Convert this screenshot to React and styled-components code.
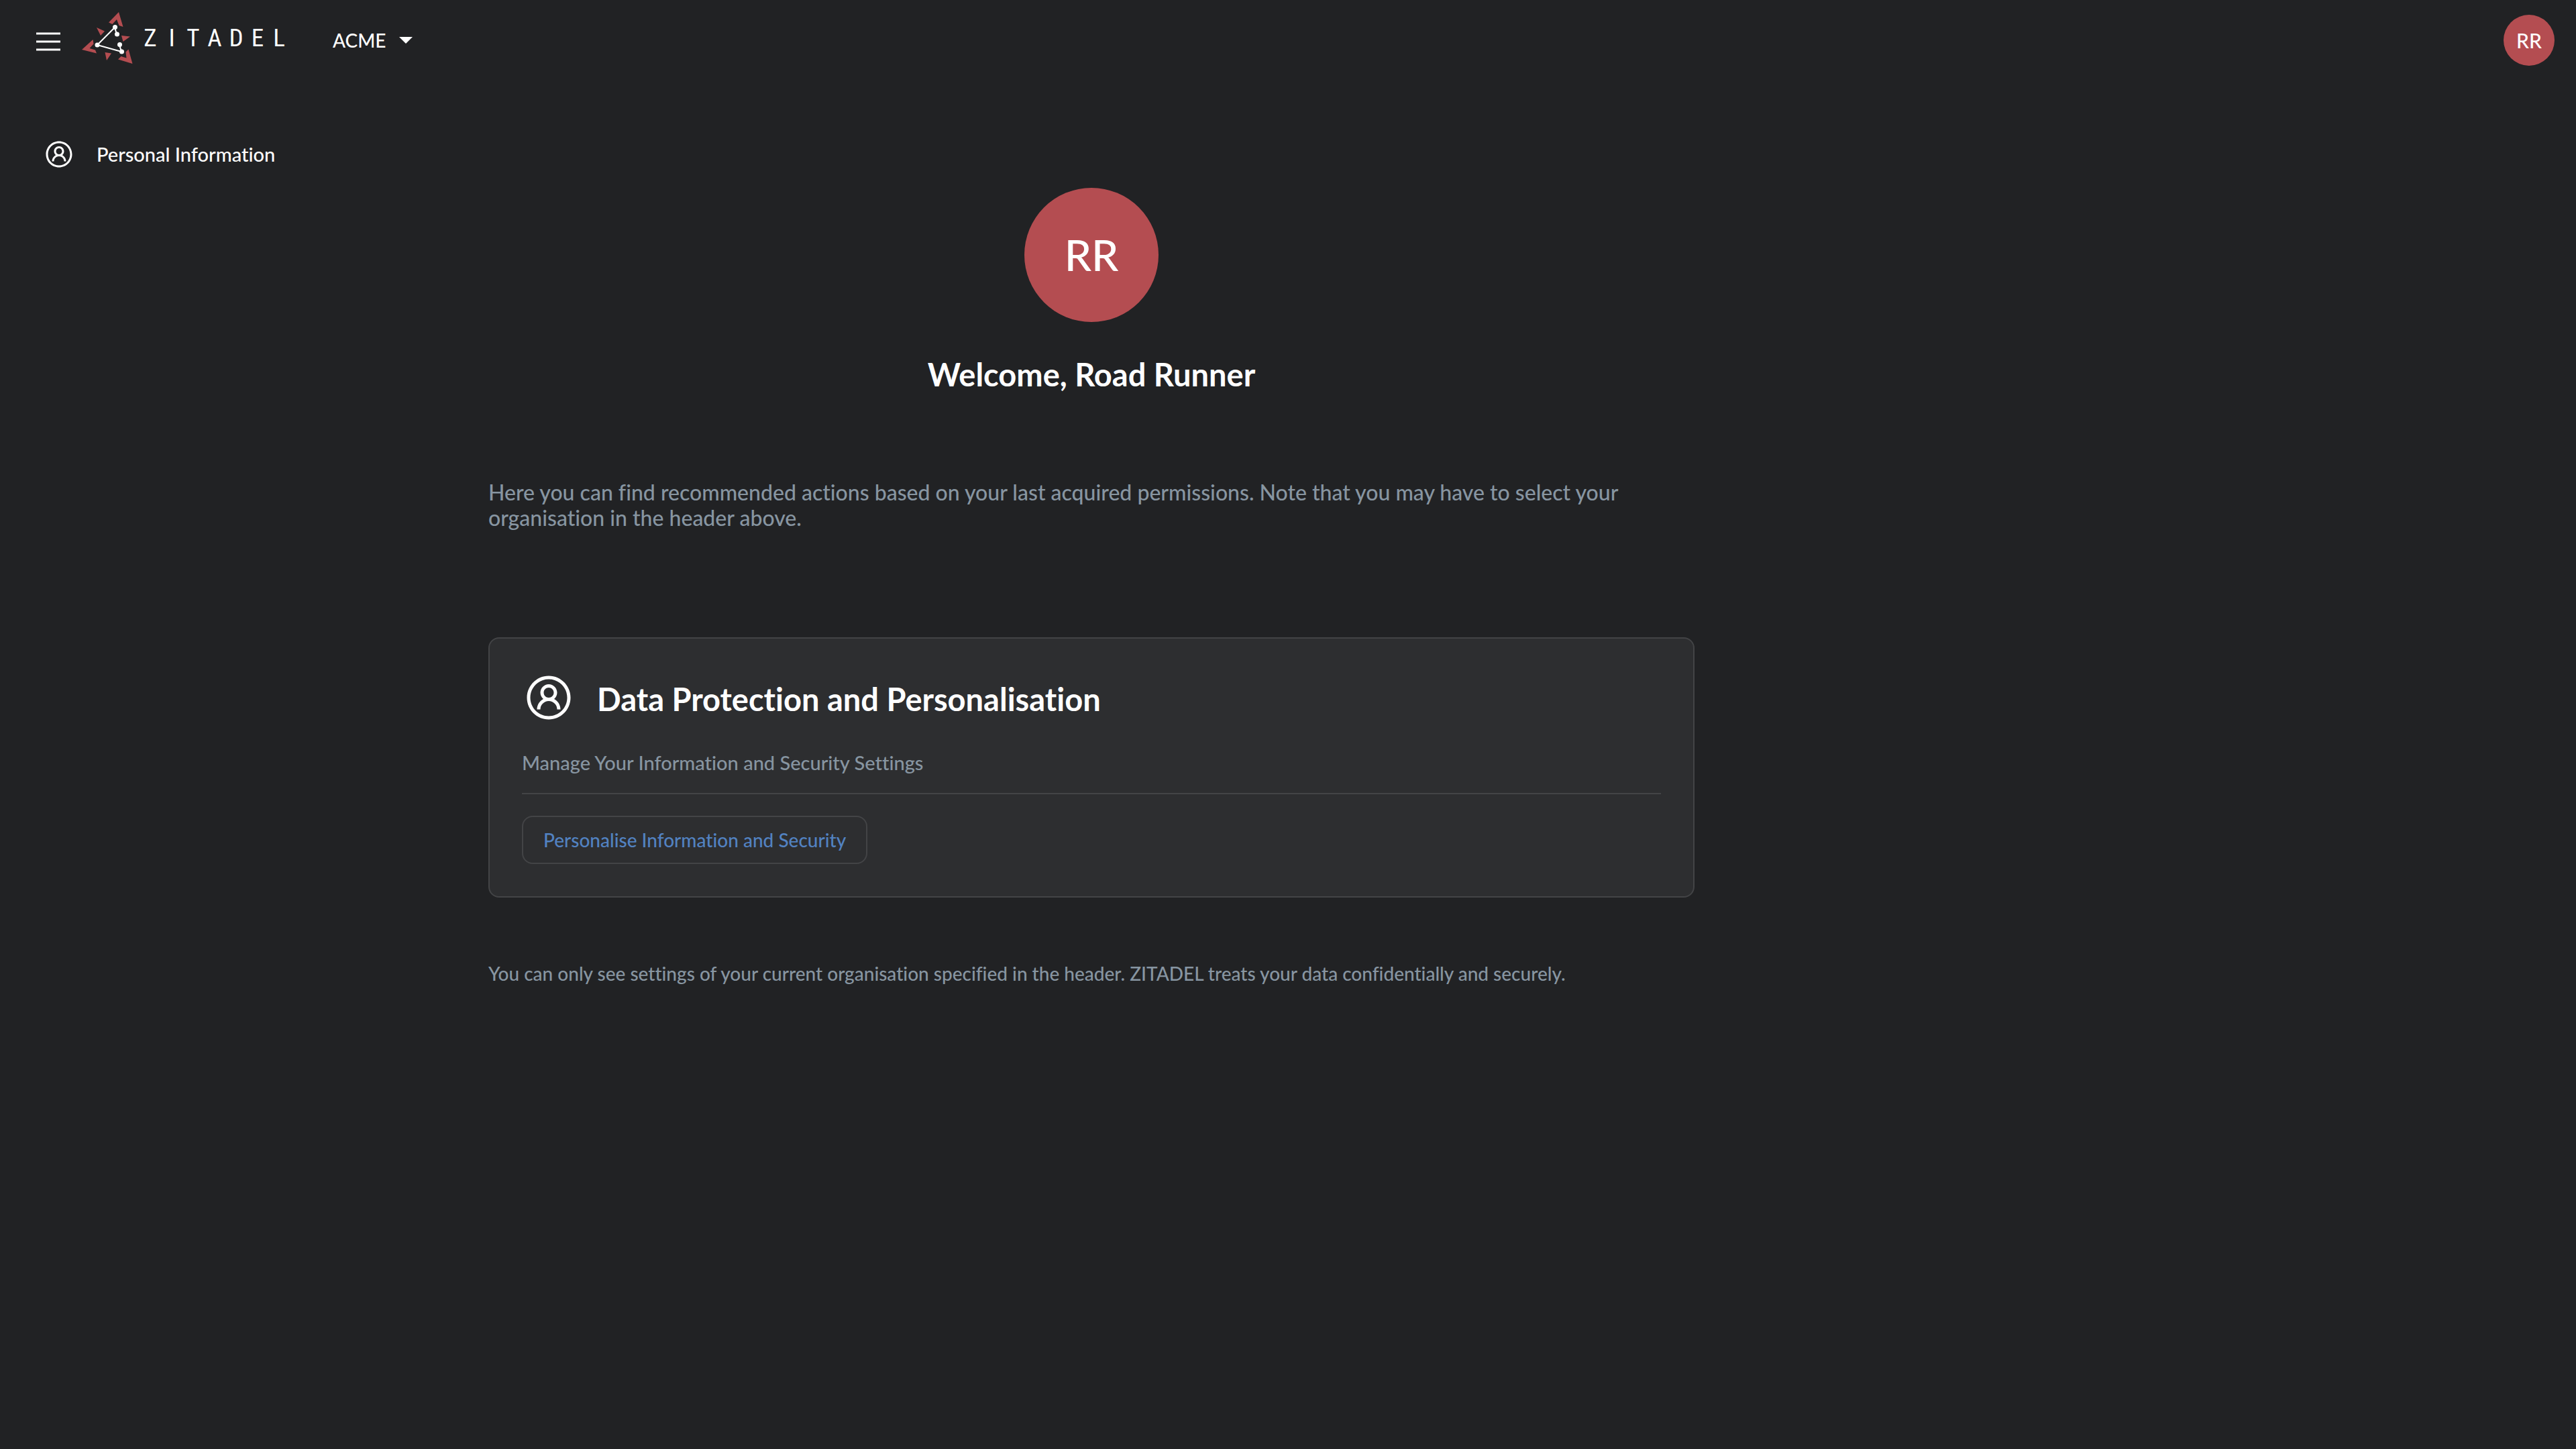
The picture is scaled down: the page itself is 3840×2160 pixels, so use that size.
import React from "react";
import styled, { createGlobalStyle } from "styled-components";
import { LiaBarsSolid, LiaUserCircleSolid } from "react-icons/lia";

const color = {
  background: "#212224",
  card: "#2d2e30",
  border: "#434446",
  text: "#ffffff",
  muted: "#8795a1",
  primary: "#5282c1",
  accent: "#b44d51",
};

const GlobalStyle = createGlobalStyle`
  *, *::before, *::after { box-sizing: border-box; }
  body {
    margin: 0;
    background: ${color.background};
    color: ${color.text};
    font-family: Lato, "Liberation Sans", sans-serif;
    font-size: 28px;
    font-weight: 500;
    line-height: 34px;
    font-variant-ligatures: none;
  }
  button { font: inherit; color: inherit; background: none; border: 0; padding: 0; cursor: pointer; }
  a { color: inherit; text-decoration: none; }
  h1, h2, p { margin: 0; }
  svg { display: block; flex: none; }
`;

const Page = styled.div`
  display: flex;
  flex-direction: column;
  min-height: 100vh;
`;

const Header = styled.header`
  display: flex;
  align-items: center;
  height: 120px;
  padding: 0 32px 0 48px;
`;

const MenuButton = styled.button`
  display: flex;
  padding-top: 4px;
`;

const Brand = styled.a`
  display: flex;
  align-items: center;
  gap: 8px;
  margin-left: 26px;
  padding-bottom: 6px;
`;

const Wordmark = styled.span`
  display: grid;
  grid-template-columns: repeat(7, 32px);
  justify-items: center;
  font-family: "Liberation Sans Narrow", "Roboto Condensed", "Open Sans Condensed", Lato, sans-serif;
  font-size: 37px;
  font-weight: 400;
  line-height: 40px;
`;

const OrgButton = styled.button`
  display: flex;
  align-items: center;
  gap: 20px;
  margin-left: 64px;
`;

const Caret = styled.span`
  border: 10px solid transparent;
  border-top-color: ${color.text};
  border-bottom: 0;
`;

const Avatar = styled.span`
  display: flex;
  align-items: center;
  justify-content: center;
  width: ${(p) => p.$size}px;
  height: ${(p) => p.$size}px;
  border-radius: 50%;
  background: ${color.accent};
  font-size: ${(p) => p.$font}px;
  line-height: 1;
`;

const AccountButton = styled.button`
  margin-left: auto;
`;

const Body = styled.div`
  display: flex;
  flex: 1;
`;

const SideNav = styled.nav`
  flex: none;
  width: 728px;
  padding: 86px 64px;
`;

const NavLink = styled.a`
  display: flex;
  align-items: center;
  gap: 32px;
  font-size: 29px;
`;

const Main = styled.main`
  display: flex;
  flex-direction: column;
  flex: 0 1 1798px;
  padding: 160px 0 80px;
`;

const Hero = styled.section`
  display: flex;
  flex-direction: column;
  align-items: center;
  gap: 48px;
`;

const Title = styled.h1`
  font-size: 47px;
  line-height: 60px;
  font-weight: 700;
`;

const Description = styled.p`
  margin-top: 127px;
  color: ${color.muted};
  font-size: 32px;
  line-height: 38px;
`;

const Card = styled.section`
  margin-top: 159px;
  padding: 48px;
  border: 2px solid ${color.border};
  border-radius: 16px;
  background: ${color.card};
`;

const CardHeader = styled.div`
  display: flex;
  align-items: center;
  gap: 32px;
`;

const CardTitle = styled.h2`
  padding-top: 4px;
  font-size: 47px;
  line-height: 60px;
  font-weight: 700;
`;

const CardText = styled.p`
  padding: 40px 0 28px;
  border-bottom: 2px solid ${color.border};
  color: ${color.muted};
  font-size: 29px;
`;

const CardAction = styled.button`
  height: 72px;
  margin-top: 32px;
  padding: 0 30px;
  border: 2px solid ${color.border};
  border-radius: 16px;
  color: ${color.primary};
`;

const Footnote = styled.p`
  margin-top: 96px;
  color: ${color.muted};
`;

function LogoMark() {
  return (
    <svg width="78" height="78" viewBox="0 0 78 78" aria-hidden="true">
      <g fill={color.accent}>
        <path d="M55 0 61.500 22 55.500 20 52 11 45.500 18 40 15.500Z" />
        <path d="M22 23 34 28.500 28 35Z" />
        <path d="M59 35 72 36.500 61.500 44Z" />
        <path d="M34.500 60 44 61.500 37 72Z" />
        <path d="M0 56 16.500 41 17.500 47.500 11.500 54 20 56.500 22 61.500Z" />
        <path d="M75.500 77 54 70.500 58.500 66 66.500 68.500 65.500 59.500 69.500 55.500Z" />
      </g>
      <g stroke={color.text} strokeWidth="2" fill="none">
        <path d="M52 33 49 23 23 49 59 59 56 49" />
      </g>
      <g fill={color.text}>
        <circle cx="49.500" cy="22.500" r="3.500" />
        <circle cx="52.500" cy="33" r="3.500" />
        <circle cx="23" cy="49" r="3.500" />
        <circle cx="56.500" cy="48.500" r="3.500" />
        <circle cx="59.500" cy="59" r="3.500" />
      </g>
    </svg>
  );
}

export default function App() {
  return (
    <Page>
      <GlobalStyle />
      <Header>
        <MenuButton type="button" aria-label="Menu">
          <LiaBarsSolid size={48} />
        </MenuButton>
        <Brand href="#" aria-label="ZITADEL">
          <LogoMark />
          <Wordmark>
            {"ZITADEL".split("").map((letter) => (
              <span key={letter}>{letter}</span>
            ))}
          </Wordmark>
        </Brand>
        <OrgButton type="button">
          ACME
          <Caret />
        </OrgButton>
        <AccountButton type="button" aria-label="Account">
          <Avatar $size={76} $font={30}>RR</Avatar>
        </AccountButton>
      </Header>
      <Body>
        <SideNav>
          <NavLink href="#">
            <LiaUserCircleSolid size={48} />
            Personal Information
          </NavLink>
        </SideNav>
        <Main>
          <Hero>
            <Avatar $size={200} $font={64}>RR</Avatar>
            <Title>Welcome, Road Runner</Title>
          </Hero>
          <Description>
            Here you can find recommended actions based on your last acquired permissions. Note that
            you may have to select your organisation in the header above.
          </Description>
          <Card>
            <CardHeader>
              <LiaUserCircleSolid size={80} />
              <CardTitle>Data Protection and Personalisation</CardTitle>
            </CardHeader>
            <CardText>Manage Your Information and Security Settings</CardText>
            <CardAction type="button">Personalise Information and Security</CardAction>
          </Card>
          <Footnote>
            You can only see settings of your current organisation specified in the header. ZITADEL
            treats your data confidentially and securely.
          </Footnote>
        </Main>
      </Body>
    </Page>
  );
}
